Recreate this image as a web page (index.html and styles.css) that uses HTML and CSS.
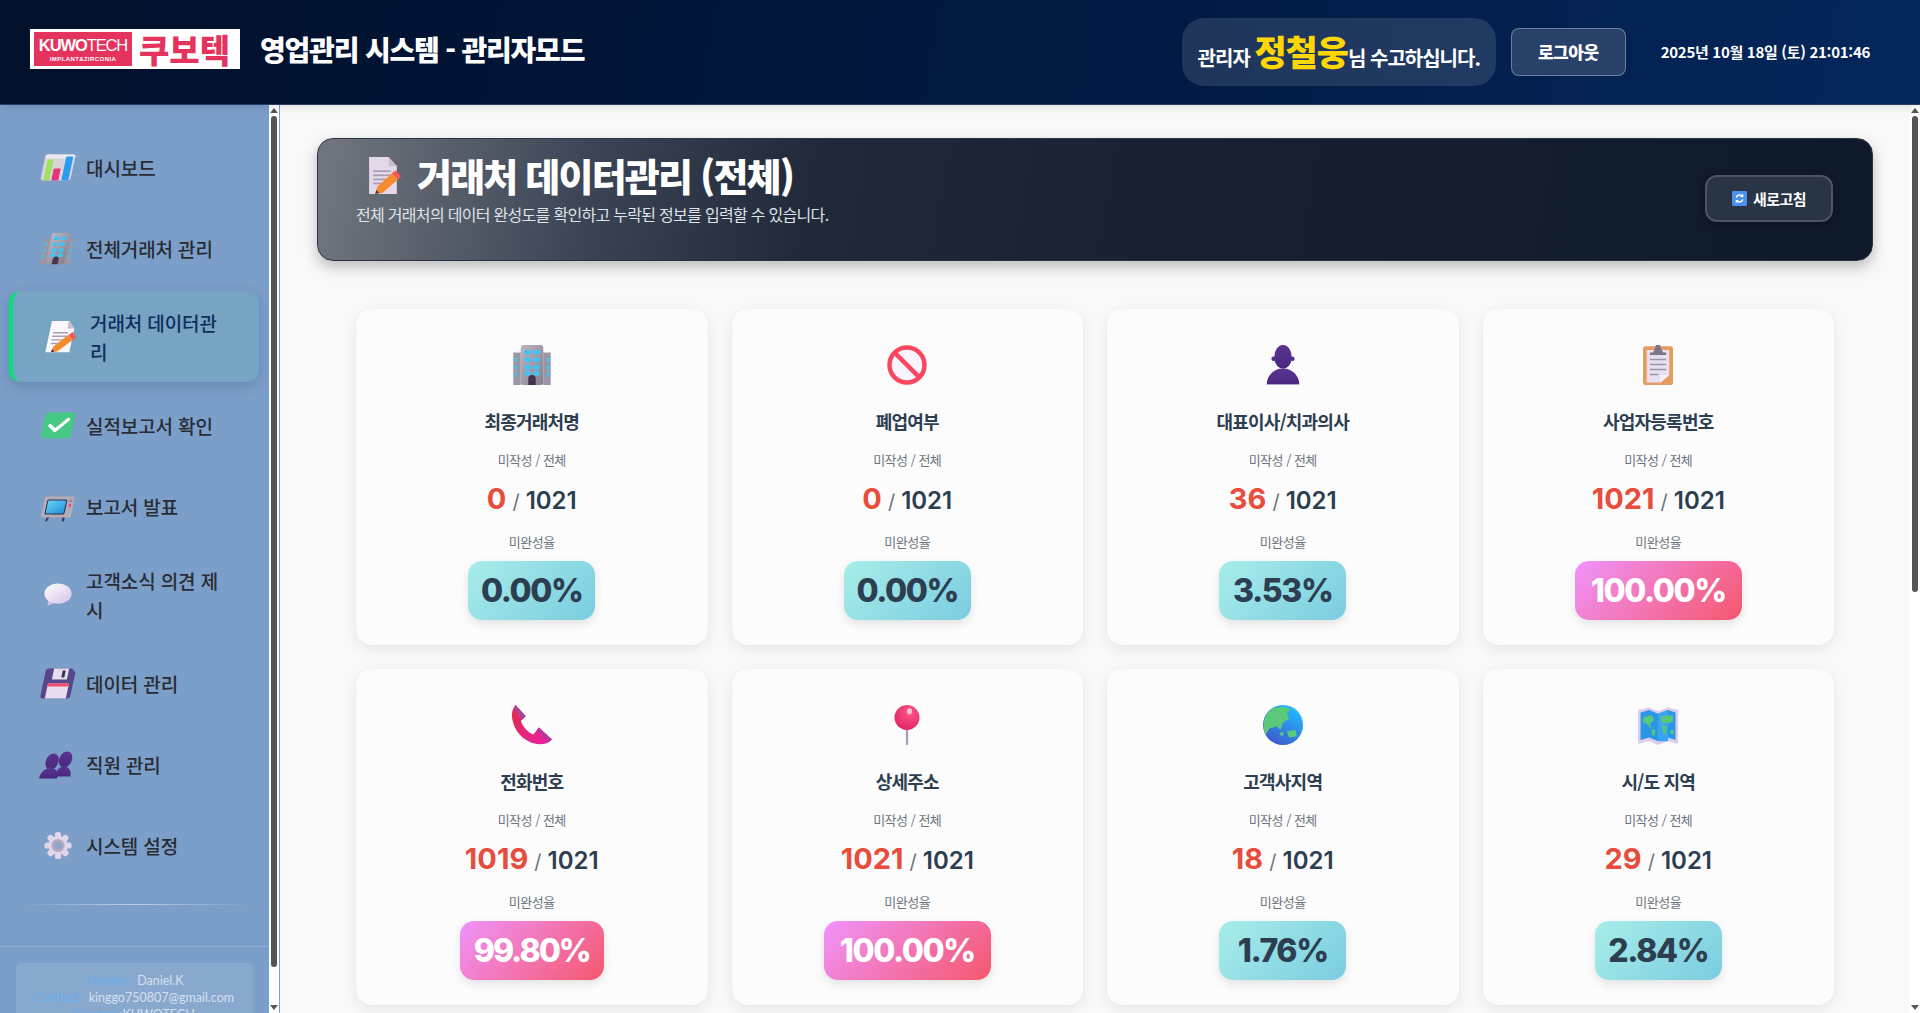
FILE: index.html
```html
<!DOCTYPE html>
<html lang="ko">
<head>
  <meta charset="UTF-8" />
  <meta name="viewport" content="width=device-width, initial-scale=1.0"/>
  <title>영업관리 시스템 - 관리자모드</title>
  <link rel="stylesheet" href="styles.css">
</head>
<body>
  <svg class="sprite" xmlns="http://www.w3.org/2000/svg">
    <defs>
      <linearGradient id="g-steel" x1="0" y1="0" x2="1" y2="1"><stop offset="0" stop-color="#bdb6c2"/><stop offset="1" stop-color="#857e8c"/></linearGradient>
      <linearGradient id="g-purple" x1="0" y1="0" x2="0" y2="1"><stop offset="0" stop-color="#5b3490"/><stop offset="1" stop-color="#47297f"/></linearGradient>
      <linearGradient id="g-screen" x1="0" y1="0" x2="1" y2="1"><stop offset="0" stop-color="#62d4f7"/><stop offset="1" stop-color="#2a8edb"/></linearGradient>
      <linearGradient id="g-bubble" x1="0" y1="0" x2="1" y2="1"><stop offset="0" stop-color="#ffffff"/><stop offset="1" stop-color="#d4c2e8"/></linearGradient>
      <linearGradient id="g-phone" x1="0" y1="0" x2="1" y2="1"><stop offset="0" stop-color="#e32c45"/><stop offset="1" stop-color="#e81fa8"/></linearGradient>
      <radialGradient id="g-pin" cx="0.6" cy="0.3" r="0.8"><stop offset="0" stop-color="#fb5a86"/><stop offset="1" stop-color="#e01c66"/></radialGradient>
      <linearGradient id="g-globe" x1="0.8" y1="0" x2="0.2" y2="1"><stop offset="0" stop-color="#1fc0ff"/><stop offset="1" stop-color="#3d55cc"/></linearGradient>
      <symbol id="i-chart" viewBox="0 0 32 32">
        <rect x="1" y="3" width="30" height="26" rx="3" fill="#d8d5dd"/>
        <rect x="1" y="3" width="30" height="4" rx="2" fill="#eceaef"/>
        <rect x="4" y="8" width="6" height="21" rx="1" fill="#a4e25e"/>
        <rect x="12" y="17" width="7" height="12" rx="1" fill="#e8347c"/>
        <rect x="22" y="5" width="7" height="24" rx="1" fill="#2b9cf0"/>
      </symbol>
      <symbol id="i-building" viewBox="0 0 32 32">
        <rect x="1" y="6" width="6" height="26" fill="#9c95a3"/>
        <rect x="25" y="6" width="6" height="26" fill="#9c95a3"/>
        <rect x="7" y="0" width="18" height="32" rx="2" fill="url(#g-steel)"/>
        <g fill="#3fc4f8">
          <rect x="10" y="4" width="5" height="3.5"/><rect x="17" y="4" width="5" height="3.5"/>
          <rect x="10" y="10" width="5" height="3.5"/><rect x="17" y="10" width="5" height="3.5"/>
          <rect x="10" y="16" width="5" height="3.5"/><rect x="17" y="16" width="5" height="3.5"/>
          <rect x="10" y="21" width="5" height="3.5"/><rect x="17" y="21" width="5" height="3.5"/>
          <rect x="2" y="10" width="2" height="3.5"/><rect x="2" y="16" width="2" height="3.5"/><rect x="2" y="22" width="2" height="3.5"/>
          <rect x="28" y="10" width="2" height="3.5"/><rect x="28" y="16" width="2" height="3.5"/><rect x="28" y="22" width="2" height="3.5"/>
        </g>
        <path d="M13 32v-5a3 3 0 0 1 6 0v5z" fill="#43344f"/>
      </symbol>
      <symbol id="i-doc" viewBox="0 0 32 36">
        <path d="M1 0H20L28 9V36H1Z" fill="var(--page, #e3d9e9)"/>
        <path d="M20 0L28 9H20Z" fill="#c8bed0"/>
        <g fill="#a79cb4"><rect x="5" y="13" width="17" height="1.6"/><rect x="5" y="17" width="17" height="1.6"/><rect x="5" y="21" width="14" height="1.6"/><rect x="5" y="25" width="9" height="1.6"/></g>
        <path d="M7 36L9 29L23 16L29 22L14 35Z" fill="#f58b2d"/>
        <path d="M23 16L27 13L32 19L29 22Z" fill="#f6594f"/>
        <path d="M7 36L8 32L11 35Z" fill="#4a3a52"/>
      </symbol>
      <symbol id="i-check" viewBox="0 0 32 32">
        <rect x="1" y="3" width="30" height="26" rx="3" fill="#46c985"/>
        <path d="M8 16l6 5L25 10" fill="none" stroke="#fff" stroke-width="3.4" stroke-linecap="round" stroke-linejoin="round"/>
      </symbol>
      <symbol id="i-tv" viewBox="0 0 32 32">
        <path d="M12 6L8 2M16 6L21 2" stroke="#9c95a3" stroke-width="1" fill="none"/>
        <path d="M7 26L6 31H8L10 26ZM22 26L23 31H25L25 26Z" fill="#4a3a68"/>
        <rect x="1" y="6" width="30" height="21" rx="2" fill="#b3acb9"/>
        <rect x="4" y="9" width="20" height="15" rx="1.5" fill="#2f2b44"/>
        <rect x="5" y="10" width="18" height="13" rx="1" fill="url(#g-screen)"/>
        <circle cx="27.5" cy="15" r="1.4" fill="#ef3f74"/>
        <rect x="26" y="9" width="3" height="2.5" fill="#8f8896"/>
      </symbol>
      <symbol id="i-bubble" viewBox="0 0 32 32">
        <path d="M5 21L4 29L12 25Z" fill="#d4c2e8"/>
        <ellipse cx="16" cy="15" rx="15.5" ry="11.5" fill="url(#g-bubble)"/>
      </symbol>
      <symbol id="i-floppy" viewBox="0 0 32 32">
        <path d="M4 1H27L31 5V28a3 3 0 0 1-3 3H4a3 3 0 0 1-3-3V4a3 3 0 0 1 3-3Z" fill="#574689"/>
        <rect x="9" y="1" width="15" height="11" fill="#e6deef"/>
        <rect x="18" y="3" width="3" height="7" fill="#3b3058"/>
        <rect x="6" y="16" width="21" height="15" fill="#e6deef"/>
        <rect x="6" y="16" width="21" height="3" fill="#ef4f6c"/>
      </symbol>
      <symbol id="i-people" viewBox="0 0 32 32">
        <g fill="url(#g-purple)">
          <ellipse cx="22.5" cy="11" rx="6.5" ry="8"/><path d="M15 28c0-7 4-10 7.500-10S31 21 31 28Z"/>
          <ellipse cx="9.500" cy="13" rx="6.500" ry="8"/><path d="M0 30c0-7 5-11 9.500-11S18 23 18 30Z"/>
        </g>
      </symbol>
      <symbol id="i-gear" viewBox="0 0 32 32">
        <g fill="#e2d6ea">
          <circle cx="16" cy="16" r="11"/>
          <rect x="12.500" y="0.500" width="7" height="31" rx="3"/>
          <rect x="12.500" y="0.500" width="7" height="31" rx="3" transform="rotate(45 16 16)"/>
          <rect x="12.500" y="0.500" width="7" height="31" rx="3" transform="rotate(90 16 16)"/>
          <rect x="12.500" y="0.500" width="7" height="31" rx="3" transform="rotate(135 16 16)"/>
        </g>
        <circle cx="16" cy="16" r="7.500" fill="#b7a9c2"/>
        <circle cx="16" cy="16" r="4.500" fill="#8ea6ca"/>
      </symbol>
      <symbol id="i-ban" viewBox="0 0 32 32">
        <circle cx="16" cy="16" r="14" fill="#f9f4ff" stroke="#f9475f" stroke-width="3.6"/>
        <path d="M6.500 6.500L25.500 25.500" stroke="#f9475f" stroke-width="3.6"/>
      </symbol>
      <symbol id="i-person" viewBox="0 0 32 32">
        <g fill="url(#g-purple)">
          <ellipse cx="16" cy="9.500" rx="7" ry="9.500"/>
          <circle cx="8.500" cy="11" r="1.800"/><circle cx="23.500" cy="11" r="1.800"/>
          <path d="M3 31.500C3 24 9 20 13 19h6c4 1 10 5 10 12.500Z"/>
        </g>
        <rect x="3" y="31.300" width="26" height="0.700" fill="#bba6d8"/>
      </symbol>
      <symbol id="i-clipboard" viewBox="0 0 32 32">
        <rect x="4" y="1" width="24" height="31" rx="2" fill="#e59c60"/>
        <path d="M7 4H25V24L18 30H7Z" fill="#e8e0f1"/>
        <path d="M25 24L18 30V24Z" fill="#f4eff8"/>
        <path d="M9.500 6H12L14 1.500a2 2 0 0 1 4 0L20 6H22.500V8H9.500Z" fill="#7e7589"/>
        <g fill="#9c93a8"><rect x="9.500" y="11" width="13" height="1.200"/><rect x="9.500" y="15" width="13" height="1.200"/><rect x="9.500" y="19" width="13" height="1.200"/><rect x="9.500" y="23" width="7" height="1.200"/></g>
      </symbol>
      <symbol id="i-phone" viewBox="3 0 29 32" preserveAspectRatio="none">
        <path d="M5.500 0L13 9L9.500 12.500C10.500 17 14.500 22 18.500 23.500L22.500 18L32 27.500C29 31 24.500 32 20 31C11 29 4 20 3 10C2.700 6 3.500 3 5.500 0Z" fill="url(#g-phone)"/>
        <path d="M5.500 0L13 9L10.500 11.500L5 4Z" fill="#a9449d"/>
        <path d="M22.500 18L32 27.500L29.500 29.500L21 20Z" fill="#b3379f"/>
      </symbol>
      <symbol id="i-pin" viewBox="0 0 32 32">
        <rect x="15.100" y="18" width="1.800" height="14" fill="#a99eb4"/>
        <circle cx="16" cy="10" r="10" fill="url(#g-pin)"/>
        <ellipse cx="18" cy="5" rx="2" ry="2.500" fill="#ffc4d6"/>
      </symbol>
      <symbol id="i-globe" viewBox="0 0 32 32">
        <circle cx="16" cy="16" r="16" fill="url(#g-globe)"/>
        <path d="M6 4C10 1 16 1 22 3L19 7L21 11L16 14L14 20L11 17L5 19L2 24C-1 16 1 8 6 4Z" fill="#5cc97a"/>
        <path d="M19 21L26 20L27 25L21 26Z" fill="#5cc97a"/>
        <circle cx="15" cy="23" r="1.500" fill="#5cc97a"/>
      </symbol>
      <symbol id="i-map" viewBox="0 0 32 32">
        <path d="M0 4L9 2L16 5L24 2L32 4V31L24 29L16 32L9 29L0 31Z" fill="#ddcdeb"/>
        <path d="M2 6L9 4L16 7L24 4L30 6V28L24 26L16 29L9 26L2 28Z" fill="#2b95ea"/>
        <path d="M16 7V29H24V4Z" fill="#3aa4f0"/>
        <g fill="#56c77a">
          <path d="M4 10L11 8L13 12L10 15L10 19L7 15L4 14Z"/>
          <path d="M11 19L14 20L13 25L11 24Z"/>
          <path d="M18 9L28 8L28 13L24 15L22 14L19 15Z"/>
          <path d="M19 16L23 17L22 24L20 22Z"/>
          <path d="M26 20L29 20L28 24L26 23Z"/>
        </g>
      </symbol>
      <symbol id="i-refresh" viewBox="0 0 32 32">
        <rect width="32" height="32" rx="3" fill="#4a90f0"/>
        <g fill="none" stroke="#fff" stroke-width="3">
          <path d="M9 14a7.500 7.500 0 0 1 13-3"/><path d="M23 18a7.500 7.500 0 0 1-13 3"/>
        </g>
        <path d="M24 6v7h-7ZM8 26v-7h7Z" fill="#fff"/>
      </symbol>
    </defs>
  </svg>

  <header class="topbar">
    <div class="brand">
      <div class="logo">
        <div class="logo-mark">
          <span class="logo-name"><b>KUWO</b>TECH</span>
          <span class="logo-sub">IMPLANT&amp;ZIRCONIA</span>
        </div>
        <span class="logo-ko">쿠보텍</span>
      </div>
      <h1 class="app-title">영업관리 시스템 - 관리자모드</h1>
    </div>
    <div class="top-right">
      <div class="greeting"><span>관리자 <strong>정철웅</strong>님 수고하십니다.</span></div>
      <button class="logout">로그아웃</button>
      <div class="clock">2025년 10월 18일 (토) 21:01:46</div>
    </div>
  </header>

  <div class="shell">
    <aside class="sidebar">
      <nav class="nav">
        <a class="nav-item"><svg class="nav-icon"><use href="#i-chart"/></svg><span>대시보드</span></a>
        <a class="nav-item"><svg class="nav-icon"><use href="#i-building"/></svg><span>전체거래처 관리</span></a>
        <a class="nav-item active"><svg class="nav-icon"><use href="#i-doc"/></svg><span>거래처 데이터관리</span></a>
        <a class="nav-item"><svg class="nav-icon"><use href="#i-check"/></svg><span>실적보고서 확인</span></a>
        <a class="nav-item"><svg class="nav-icon"><use href="#i-tv"/></svg><span>보고서 발표</span></a>
        <a class="nav-item"><svg class="nav-icon flat"><use href="#i-bubble"/></svg><span>고객소식 의견 제시</span></a>
        <a class="nav-item"><svg class="nav-icon"><use href="#i-floppy"/></svg><span>데이터 관리</span></a>
        <a class="nav-item"><svg class="nav-icon"><use href="#i-people"/></svg><span>직원 관리</span></a>
        <a class="nav-item"><svg class="nav-icon flat"><use href="#i-gear"/></svg><span>시스템 설정</span></a>
      </nav>
      <div class="nav-divider"></div>
      <div class="side-footer">
        <div class="credit">
          <p><em>Creator:</em> Daniel.K</p>
          <p><em>Contact:</em> kinggo750807@gmail.com</p>
          <p><em>Owner:</em> KUWOTECH</p>
        </div>
      </div>
    </aside>
    <div class="scrollbar side-scroll">
      <i class="arrow-up"></i>
      <i class="thumb thumb-side"></i>
      <i class="arrow-down"></i>
    </div>

    <main class="content">
      <section class="page-head">
        <div>
          <h2 class="page-title"><svg class="title-icon"><use href="#i-doc"/></svg>거래처 데이터관리 (전체)</h2>
          <p class="page-desc">전체 거래처의 데이터 완성도를 확인하고 누락된 정보를 입력할 수 있습니다.</p>
        </div>
        <button class="refresh"><svg class="refresh-icon"><use href="#i-refresh"/></svg>새로고침</button>
      </section>

      <section class="stats">
        <article class="card">
          <svg class="card-icon"><use href="#i-building"/></svg>
          <h3>최종거래처명</h3>
          <p class="muted">미작성 / 전체</p>
          <p class="count"><b>0</b> <i>/</i> 1021</p>
          <p class="muted rate-label">미완성율</p>
          <span class="rate ok">0.00%</span>
        </article>
        <article class="card">
          <svg class="card-icon"><use href="#i-ban"/></svg>
          <h3>폐업여부</h3>
          <p class="muted">미작성 / 전체</p>
          <p class="count"><b>0</b> <i>/</i> 1021</p>
          <p class="muted rate-label">미완성율</p>
          <span class="rate ok">0.00%</span>
        </article>
        <article class="card">
          <svg class="card-icon"><use href="#i-person"/></svg>
          <h3>대표이사/치과의사</h3>
          <p class="muted">미작성 / 전체</p>
          <p class="count"><b>36</b> <i>/</i> 1021</p>
          <p class="muted rate-label">미완성율</p>
          <span class="rate ok">3.53%</span>
        </article>
        <article class="card">
          <svg class="card-icon"><use href="#i-clipboard"/></svg>
          <h3>사업자등록번호</h3>
          <p class="muted">미작성 / 전체</p>
          <p class="count"><b>1021</b> <i>/</i> 1021</p>
          <p class="muted rate-label">미완성율</p>
          <span class="rate bad">100.00%</span>
        </article>
        <article class="card">
          <svg class="card-icon"><use href="#i-phone"/></svg>
          <h3>전화번호</h3>
          <p class="muted">미작성 / 전체</p>
          <p class="count"><b>1019</b> <i>/</i> 1021</p>
          <p class="muted rate-label">미완성율</p>
          <span class="rate bad tight">99.80%</span>
        </article>
        <article class="card">
          <svg class="card-icon"><use href="#i-pin"/></svg>
          <h3>상세주소</h3>
          <p class="muted">미작성 / 전체</p>
          <p class="count"><b>1021</b> <i>/</i> 1021</p>
          <p class="muted rate-label">미완성율</p>
          <span class="rate bad">100.00%</span>
        </article>
        <article class="card">
          <svg class="card-icon"><use href="#i-globe"/></svg>
          <h3>고객사지역</h3>
          <p class="muted">미작성 / 전체</p>
          <p class="count"><b>18</b> <i>/</i> 1021</p>
          <p class="muted rate-label">미완성율</p>
          <span class="rate ok">1.76%</span>
        </article>
        <article class="card">
          <svg class="card-icon"><use href="#i-map"/></svg>
          <h3>시/도 지역</h3>
          <p class="muted">미작성 / 전체</p>
          <p class="count"><b>29</b> <i>/</i> 1021</p>
          <p class="muted rate-label">미완성율</p>
          <span class="rate ok">2.84%</span>
        </article>
      </section>
    </main>
    <div class="scrollbar">
      <i class="arrow-up"></i>
      <i class="thumb thumb-main"></i>
      <i class="arrow-down"></i>
    </div>
  </div>
</body>
</html>
```

FILE: styles.css
```css
* {
  box-sizing: border-box;
}

html, body {
  margin: 0;
  height: 100%;
  overflow: hidden;
}

body {
  display: flex;
  flex-direction: column;
  font-family: "Noto Sans CJK KR", "Noto Sans", sans-serif;
  background: #f9f9fa;
  color: #2c3e50;
}

.sprite {
  width: 0;
  height: 0;
  flex: none;
}

/* top bar */
.topbar {
  flex: none;
  height: 105px;
  padding: 0 50px 1px 30px;
  display: flex;
  align-items: center;
  justify-content: space-between;
  background: linear-gradient(100deg, #02102a 0%, #011a44 60%, #05275c 100%);
  border-bottom: 1px solid #2a3f63;
  box-shadow: 0 2px 8px rgba(0,0,0,0.12);
  position: relative;
  z-index: 2;
}

.brand {
  display: flex;
  align-items: center;
  gap: 20px;
  margin-bottom: 5px;
}

.logo {
  width: 210px;
  height: 40px;
  padding: 3px 4px;
  display: flex;
  align-items: center;
  gap: 7px;
  background: #fff;
}

.logo-mark {
  width: 98px;
  height: 34px;
  display: flex;
  flex-direction: column;
  align-items: center;
  justify-content: center;
  background: #e4335d;
  color: #fff;
  font-family: "Liberation Sans", sans-serif;
}

.logo-name {
  font-size: 16.5px;
  line-height: 19px;
  letter-spacing: -1.1px;
  font-weight: 400;
}

.logo-name b {
  font-weight: 700;
}

.logo-sub {
  font-size: 6px;
  line-height: 8px;
  font-weight: 700;
  letter-spacing: 0.4px;
}

.logo-ko {
  font-size: 33px;
  line-height: 34px;
  font-weight: 900;
  color: #e4335d;
}

.app-title {
  margin: 0;
  font-size: 28px;
  font-weight: 800;
  letter-spacing: -1.2px;
  color: #fff;
}

.top-right {
  display: flex;
  align-items: center;
}

.greeting {
  width: 314px;
  height: 68px;
  display: flex;
  align-items: center;
  justify-content: center;
  background: rgba(255,255,255,0.12);
  border-radius: 22px;
  font-size: 20px;
  font-weight: 700;
  letter-spacing: -1px;
  color: #fff;
  white-space: nowrap;
}

.greeting strong {
  font-size: 35px;
  line-height: 40px;
  font-weight: 900;
  color: #ffd700;
}

.logout {
  width: 115px;
  height: 48px;
  margin-left: 15px;
  font: inherit;
  font-size: 17px;
  font-weight: 800;
  letter-spacing: -0.5px;
  color: #fff;
  background: rgba(255,255,255,0.15);
  border: 1px solid rgba(255,255,255,0.32);
  border-radius: 8px;
}

.clock {
  margin-left: 35px;
  font-size: 15px;
  font-weight: 700;
  letter-spacing: -0.3px;
  color: #fff;
}

/* layout under the top bar */
.shell {
  flex: 1;
  min-height: 0;
  display: flex;
}

.sidebar {
  width: 269px;
  flex: none;
  overflow: hidden;
  background: #7c9fc9;
}

.scrollbar {
  width: 10px;
  flex: none;
  padding: 3px 0;
  display: flex;
  flex-direction: column;
  align-items: center;
  background: #fff;
}

.side-scroll {
  width: 11px;
  padding-right: 1px;
  border-right: 1px solid #7c9fc9;
}

.thumb {
  width: 6px;
  margin-top: 3px;
  background: #555;
  border-radius: 3px;
}

.thumb-side {
  height: 851px;
}

.thumb-main {
  height: 476px;
}

.arrow-up,
.arrow-down {
  width: 0;
  height: 0;
  border-left: 4px solid transparent;
  border-right: 4px solid transparent;
}

.arrow-up {
  border-bottom: 5px solid #555;
}

.arrow-down {
  margin-top: auto;
  border-top: 5px solid #555;
}

/* side menu */
.nav {
  padding: 24px 10px 0 9px;
}

.nav-item {
  display: flex;
  align-items: center;
  gap: 10px;
  padding: 16.5px 32px 16.5px 31px;
  margin-bottom: 5px;
  border-radius: 12px;
  font-size: 19px;
  font-weight: 500;
  line-height: 29px;
  letter-spacing: -0.1px;
  color: #282c34;
}

.nav-item.active {
  --page: #fbf8fc;
  border-left: 4px solid #00e676;
  background: #77a4c2;
  box-shadow: 0 4px 14px rgba(40,60,100,0.25);
  color: #0e2e5e;
}

.nav-icon {
  width: 36px;
  height: 43px;
  flex: none;
  padding: 5.5px 1px;
  transform: skewX(-12deg);
}

.nav-icon.flat {
  padding: 7px 4px;
  transform: none;
}

.nav-divider {
  height: 1px;
  margin: 21px 20px 0;
  background: linear-gradient(90deg, transparent, rgba(255,255,255,0.5), transparent);
}

.side-footer {
  margin-top: 41px;
  padding: 16px 16px 0;
  border-top: 1px solid #8fb0d6;
}

.credit {
  padding: 9px 6px;
  background: rgba(255,255,255,0.1);
  border-radius: 6px;
  text-align: center;
  font-family: "Lato", sans-serif;
  font-size: 12.5px;
  line-height: 17px;
  color: #d6e0ee;
}

.credit p {
  margin: 0;
}

.credit em {
  font-style: normal;
  color: #64b0f2;
  margin-right: 4px;
}

/* main area */
.content {
  flex: 1;
  min-width: 0;
  overflow: hidden;
  padding: 33px 37px 0;
}

.page-head {
  height: 123px;
  padding: 0 39px 22px 38px;
  display: flex;
  align-items: center;
  justify-content: space-between;
  background: linear-gradient(100deg, #72777f 0%, #3a4455 18%, #1f2939 32%, #151f2f 60%, #0e1a2b 100%);
  border: 1px solid #2b3545;
  border-radius: 16px;
  box-shadow: 0 6px 14px rgba(0,0,0,0.25);
  color: #fff;
}

.page-title {
  margin: 0 0 3px;
  display: flex;
  align-items: center;
  font-size: 38px;
  line-height: 48px;
  font-weight: 800;
  letter-spacing: -1.8px;
}

.title-icon {
  width: 33px;
  height: 37px;
  margin: 0 16px 0 12px;
}

.page-desc {
  margin: 0;
  font-size: 16px;
  line-height: 24px;
  letter-spacing: -0.7px;
  color: #dfe3e8;
}

.refresh {
  width: 128px;
  height: 47px;
  margin-bottom: -20px;
  display: flex;
  align-items: center;
  justify-content: center;
  gap: 6px;
  font: inherit;
  font-size: 15px;
  font-weight: 700;
  letter-spacing: -0.6px;
  color: #fff;
  background: #293444;
  border: 2px solid #4b5564;
  border-radius: 12px;
  box-shadow: 0 3px 8px rgba(0,0,0,0.3);
}

.refresh-icon {
  width: 15px;
  height: 15px;
}

.stats {
  margin: 48px 39px 0;
  display: grid;
  grid-template-columns: repeat(4, 1fr);
  gap: 24px;
}

.card {
  height: 336px;
  padding-top: 36px;
  display: flex;
  flex-direction: column;
  align-items: center;
  background: #fcfcfd;
  border-radius: 16px;
  box-shadow: 0 4px 14px rgba(0,0,0,0.08);
}

.card-icon {
  width: 40px;
  height: 40px;
  flex: none;
}

.card h3 {
  margin: 23px 0 0;
  font-size: 18px;
  line-height: 26px;
  font-weight: 700;
  letter-spacing: -0.8px;
}

.muted {
  margin: 16px 0 0;
  font-size: 13px;
  line-height: 20px;
  letter-spacing: -0.5px;
  color: #6c757d;
}

.count {
  margin: 14px 0 0;
  font-family: "Inter", sans-serif;
  font-size: 24px;
  line-height: 30px;
  font-weight: 600;
  color: #2c3e50;
}

.count b {
  font-size: 29px;
  font-weight: 700;
  color: #e74c3c;
}

.count i {
  font-style: normal;
  font-weight: 400;
  font-size: 20px;
  color: #6c757d;
}

.rate-label {
  margin-top: 15px;
}

.rate {
  height: 59px;
  margin-top: 9px;
  padding: 0 16px;
  display: flex;
  align-items: center;
  justify-content: center;
  font-family: "Inter", sans-serif;
  font-size: 32px;
  font-weight: 800;
  letter-spacing: -1.4px;
  border-radius: 14px;
  box-shadow: 0 4px 10px rgba(0,0,0,0.1);
}

.rate.ok {
  width: 127px;
  padding: 0;
  background: linear-gradient(135deg, #a8edea, #7accdf);
  color: #2c3e50;
}

.rate.bad {
  background: linear-gradient(135deg, #f093fb, #f5576c);
  color: #fff;
}

.rate.tight {
  letter-spacing: -2px;
  padding: 0 14px;
}
```
